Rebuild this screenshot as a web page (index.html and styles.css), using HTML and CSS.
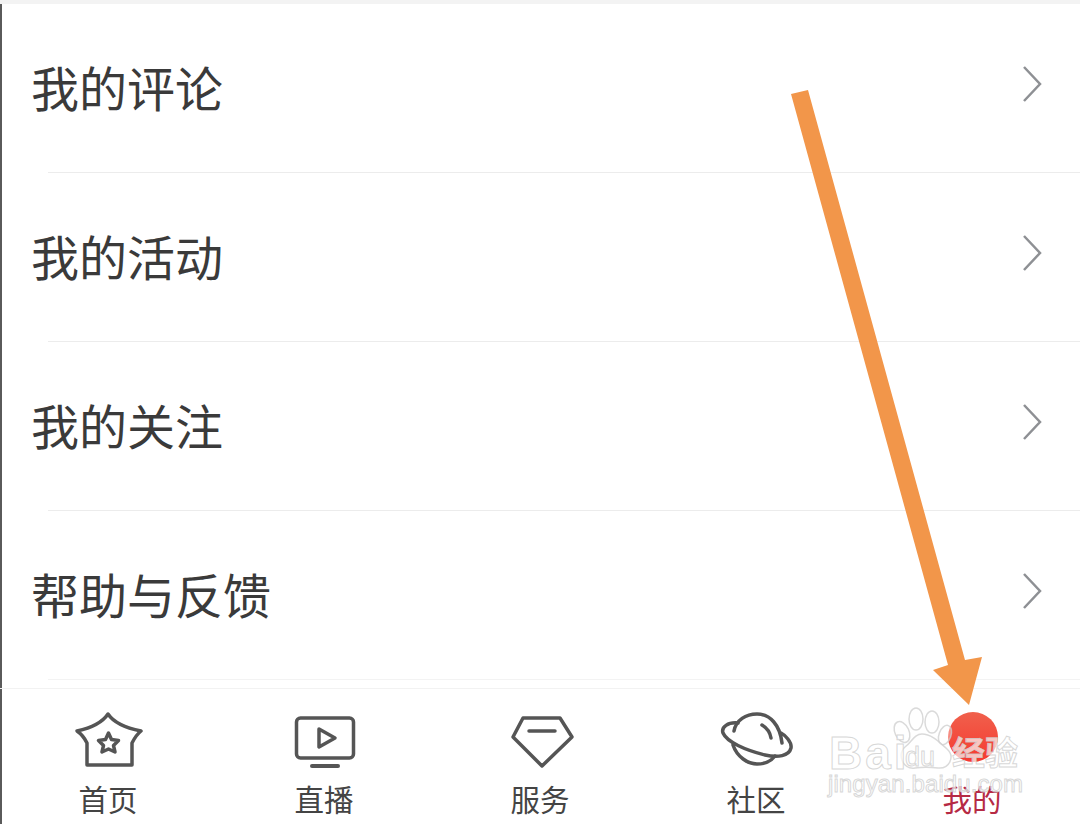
FILE: index.html
```html
<!DOCTYPE html>
<html lang="zh-CN">
<head>
<meta charset="UTF-8">
<meta name="viewport" content="width=device-width, initial-scale=1.0">
<title>我的</title>
<link rel="stylesheet" href="styles.css">
</head>
<body>
  <div class="page">
    <!-- Menu list -->
    <div class="menu">
      <div class="menu-row">
        <span class="menu-text">我的评论</span>
        <svg class="chevron" viewBox="0 0 20 38"><path d="M2 2L18 19L2 36"/></svg>
      </div>
      <div class="divider"></div>
      <div class="menu-row">
        <span class="menu-text">我的活动</span>
        <svg class="chevron" viewBox="0 0 20 38"><path d="M2 2L18 19L2 36"/></svg>
      </div>
      <div class="divider"></div>
      <div class="menu-row">
        <span class="menu-text">我的关注</span>
        <svg class="chevron" viewBox="0 0 20 38"><path d="M2 2L18 19L2 36"/></svg>
      </div>
      <div class="divider"></div>
      <div class="menu-row">
        <span class="menu-text">帮助与反馈</span>
        <svg class="chevron" viewBox="0 0 20 38"><path d="M2 2L18 19L2 36"/></svg>
      </div>
      <div class="divider divider-faint"></div>
    </div>

    <!-- Bottom tabs -->
    <nav class="tabbar">
      <div class="tab">
        <svg class="tab-icon" viewBox="68 712 80 56">
          <path d="M108 714Q100 726 77 731Q83 735 87 743V765H132V743Q136 735 141 731Q116 726 108 714Z"/>
          <path d="M108.500 733L111.500 739.500L118.500 740.500L113.500 745.500L115 752L108.500 749L102 752L103.500 745.500L98.500 740.500L105.500 739.500Z"/>
        </svg>
        <span class="tab-label">首页</span>
      </div>
      <div class="tab">
        <svg class="tab-icon" viewBox="284 712 80 56">
          <rect x="296.500" y="718" width="57" height="40" rx="4"/>
          <path d="M319 729L335 738L319 747Z"/>
          <path class="thick" d="M312 766H338"/>
        </svg>
        <span class="tab-label">直播</span>
      </div>
      <div class="tab">
        <svg class="tab-icon" viewBox="500 712 80 56">
          <path d="M523 718H560L572 737L542 766L513 737Z"/>
          <path d="M529 731H555"/>
        </svg>
        <span class="tab-label">服务</span>
      </div>
      <div class="tab">
        <svg class="tab-icon" viewBox="716 712 80 56">
          <path d="M738 723C728 722 721 727 723 733C727 742 745 750 765 755C778 758 789 756 791 748C792 742 785 735 781 733"/>
          <path d="M734 731C736 720 746 714 757 714C770 714 780 725 782 743"/>
          <path d="M733 745C737 757 748 764 757 764C766 764 772 760 775 756"/>
          <path d="M762 725C767 728 770 732 771 738"/>
        </svg>
        <span class="tab-label">社区</span>
      </div>
      <div class="tab tab-active">
        <svg class="tab-icon" viewBox="932 712 80 56">
          <defs>
            <linearGradient id="dotFill" x1="0" y1="0" x2="0" y2="1">
              <stop offset="0" stop-color="#f0604c"/>
              <stop offset="1" stop-color="#f63a30"/>
            </linearGradient>
          </defs>
          <circle class="dot" cx="973" cy="737" r="25" fill="url(#dotFill)"/>
        </svg>
        <span class="tab-label">我的</span>
      </div>
    </nav>

    <!-- Arrow and watermark drawn over the screenshot -->
    <svg class="overlay" viewBox="0 0 1080 824">
      <polygon class="arrow" points="791,94 808,90 965,660 982,657 969,705 933,670 948,665"/>
      <g class="paw">
        <ellipse cx="902" cy="732" rx="7" ry="11" transform="rotate(-25 902 732)"/>
        <ellipse cx="916" cy="719" rx="7" ry="11"/>
        <ellipse cx="932" cy="722" rx="7" ry="11"/>
        <ellipse cx="945" cy="735" rx="6" ry="10" transform="rotate(20 945 735)"/>
        <path d="M922 734C914 734 912 742 905 747C897 753 902 770 915 768C922 767 930 767 938 768C950 769 955 756 947 749C940 743 932 734 922 734Z"/>
      </g>
      <text class="mark mark-bai" x="829" y="769">Bai</text>
      <text class="mark mark-du" x="905" y="766">du</text>
      <text class="mark mark-jy" x="952" y="765">经验</text>
      <text class="mark mark-url" x="828" y="792">jingyan.baidu.com</text>
    </svg>
  </div>
</body>
</html>
```

FILE: styles.css
```css
* {
  box-sizing: border-box;
}

body {
  margin: 0;
  background-color: #ffffff;
  font-family: "Noto Sans CJK SC", "Noto Sans", sans-serif;
}

.page {
  position: relative;
  width: 1080px;
  height: 824px;
  overflow: hidden;
  display: flex;
  flex-direction: column;
  border-top: 4px solid #f3f3f3;
  box-shadow: inset 2px 0 0 #5a5a5a;
}

.menu {
  flex: none;
  height: 684px;
}

.menu-row {
  height: 168px;
  padding: 0 38px 8px 31px;
  display: flex;
  align-items: center;
  justify-content: space-between;
}

.menu-text {
  font-size: 48px;
  line-height: 64px;
  color: #3a3a3a;
  padding-top: 4px;
}

.chevron {
  width: 20px;
  height: 38px;
  fill: none;
  stroke: #8e9094;
  stroke-width: 2.5;
}

.divider {
  height: 1px;
  margin-left: 48px;
  background-color: #ececec;
}

.divider-faint {
  background-color: #f3f3f3;
}

.tabbar {
  flex: 1;
  display: grid;
  grid-template-columns: repeat(5, 1fr);
  border-top: 1px solid #f2f2f2;
  padding-top: 23px;
}

.tab {
  display: flex;
  flex-direction: column;
  align-items: center;
  gap: 10px;
}

.tab-icon {
  width: 80px;
  height: 56px;
  overflow: visible;
  fill: none;
  stroke: #555555;
  stroke-width: 3.5;
  stroke-linejoin: round;
  stroke-linecap: round;
}

.tab-icon .thick {
  stroke-width: 4;
}

.tab-icon .dot {
  stroke: none;
}

.tab-label {
  font-size: 29.500px;
  line-height: 40px;
  color: #444444;
}

.tab-active .tab-label {
  color: #b62a44;
}

.overlay {
  position: absolute;
  top: -4px;
  left: 0;
  width: 1080px;
  height: 824px;
}

.arrow {
  fill: #f2964a;
}

.paw {
  fill: rgba(255, 255, 255, 0.35);
  stroke: rgba(205, 205, 205, 0.75);
  stroke-width: 1.500;
}

.mark {
  font-family: "Liberation Sans", "Noto Sans CJK SC", sans-serif;
  fill: rgba(255, 255, 255, 0.7);
  stroke: rgba(205, 205, 205, 0.8);
  stroke-width: 1;
}

.mark-bai {
  font-size: 46px;
  font-weight: 700;
  letter-spacing: 3px;
}

.mark-du {
  font-size: 27px;
}

.mark-jy {
  font-family: "Noto Sans CJK SC", sans-serif;
  font-size: 33px;
  font-weight: 700;
}

.mark-url {
  font-size: 24px;
  letter-spacing: 0.100px;
}
```
